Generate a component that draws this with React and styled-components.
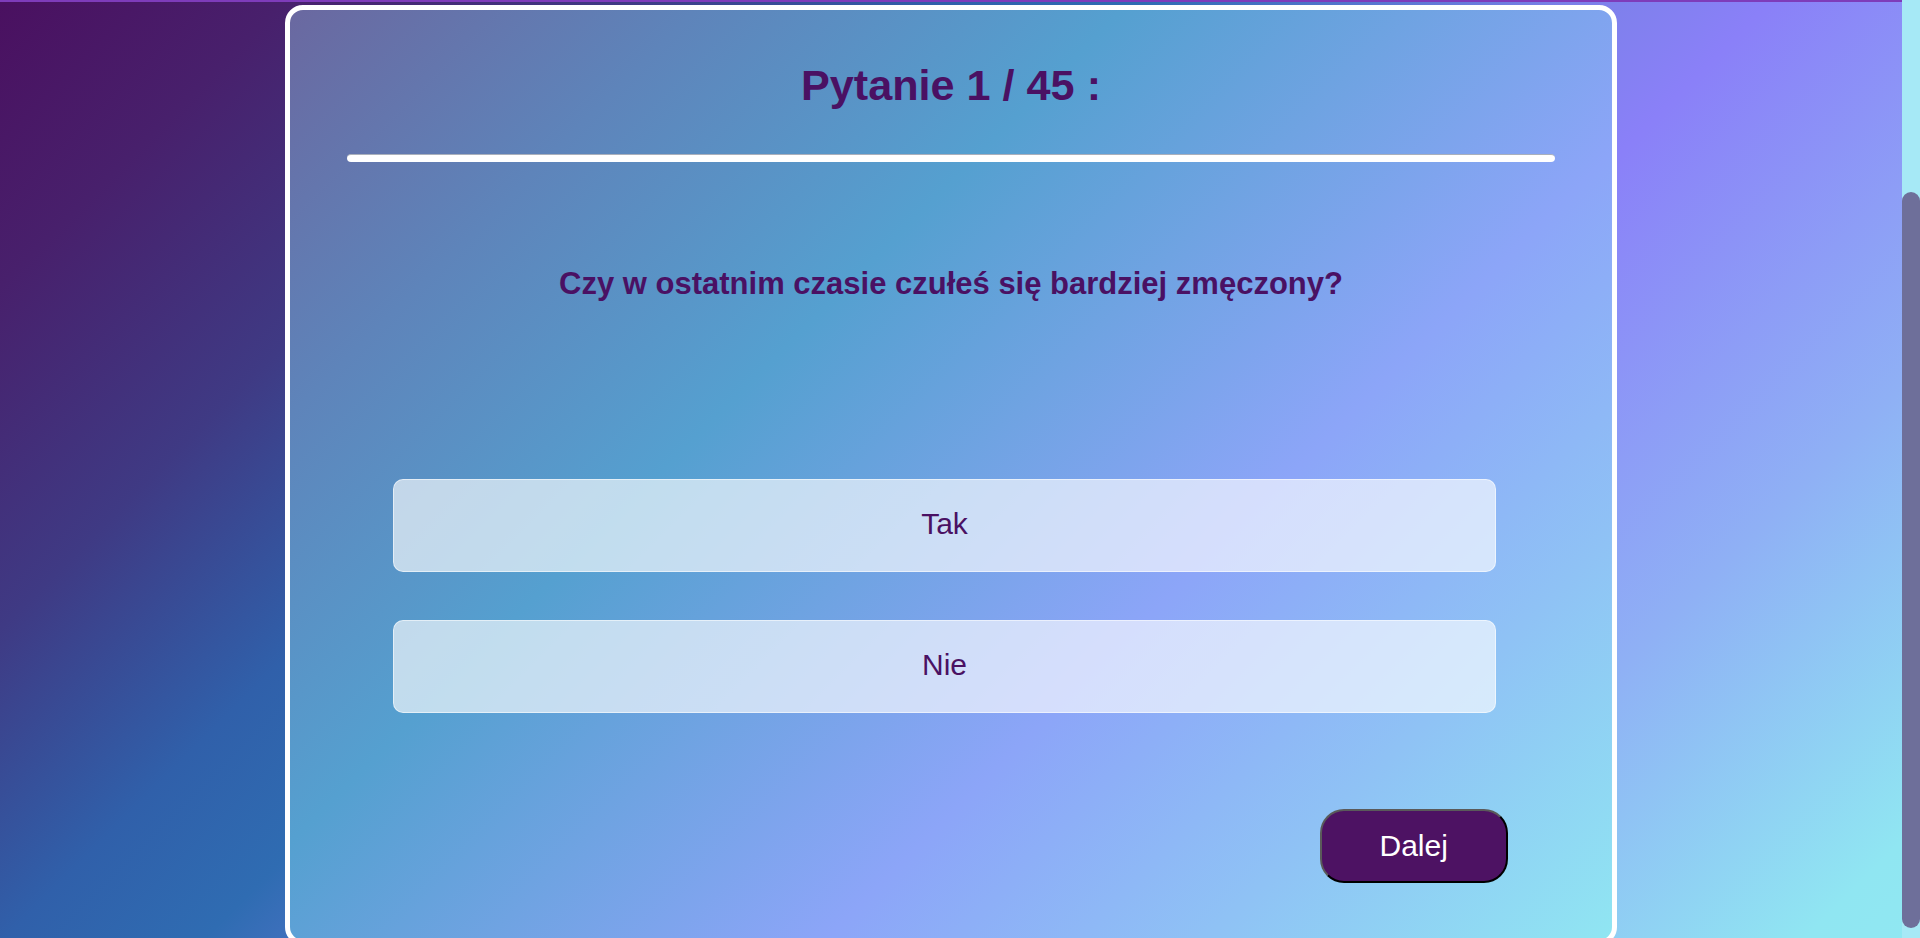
import React, { useLayoutEffect, useRef, useState } from "react";
import styled, { createGlobalStyle } from "styled-components";

const GlobalStyle = createGlobalStyle`
  body {
    margin: 0;
    font-family: "Liberation Sans", Arial, sans-serif;
    color: #4a1163;
  }
`;

const Frame = styled.div`
  height: 100vh;
  display: flex;
  overflow: hidden;
  background: linear-gradient(135deg, #4a1060 0%, #48206c 10%, #3f3a84 22%, #3060aa 33%, #2f6cb2 40%, #7b80e8 55%, #8a80f8 62%, #8fb0f5 80%, #90e6f2 96%, #90e8f2 100%);
`;

const Scroller = styled.div`
  flex: 1;
  overflow-y: auto;
  scrollbar-width: none;
  &::-webkit-scrollbar {
    display: none;
  }
`;

const Rail = styled.div`
  width: 18px;
  flex-shrink: 0;
  background: #a6e9f6;
  display: flex;
  flex-direction: column;
`;

const Thumb = styled.div`
  margin-top: 192px;
  height: 736px;
  border-radius: 9px;
  background: #6e6f9a;
`;

const Page = styled.div`
  display: flex;
  flex-direction: column;
  align-items: center;
  padding-bottom: 5px;
`;

const TopBar = styled.nav`
  align-self: stretch;
  height: 245px;
  border-bottom: 2px solid #7e3cba;
`;

const Card = styled.main`
  width: 70%;
  box-sizing: border-box;
  margin-top: 3px;
  border: 5px solid #fff;
  border-radius: 18px;
  background: linear-gradient(135deg, #6a68a0 0%, #5e84ba 18%, #55a0d0 37%, #6fa3e2 50%, #8ca5f8 65%, #8fc2f5 82%, #90e6f2 100%);
  padding: 51px 0 57px;
  display: flex;
  flex-direction: column;
`;

const Title = styled.h1`
  margin: 0;
  text-align: center;
  font-size: 2.7rem;
  font-weight: 700;
`;

const Rule = styled.hr`
  margin: 44px 57px 0;
  height: 7px;
  border: none;
  border-top: 1px solid #aab0bc;
  border-radius: 4px;
  background: #fff;
`;

const Question = styled.p`
  margin: 104px 0 0;
  text-align: center;
  font-size: 31px;
  font-weight: 700;
`;

const Options = styled.div`
  margin-top: 177px;
  padding: 0 116px 0 103px;
  display: flex;
  flex-direction: column;
  gap: 48px;
`;

const Option = styled.button`
  height: 93px;
  box-sizing: border-box;
  display: flex;
  align-items: center;
  justify-content: center;
  padding: 0 0 4px;
  border: 1px solid rgba(255, 255, 255, 0.55);
  border-radius: 10px;
  background: ${({ $selected }) =>
    $selected ? "rgba(255, 255, 255, 0.85)" : "rgba(255, 255, 255, 0.64)"};
  font-family: inherit;
  font-size: 30px;
  color: #4a1163;
  cursor: pointer;
`;

const Footer = styled.div`
  margin-top: 96px;
  padding-right: 104px;
  display: flex;
  justify-content: flex-end;
`;

const NextButton = styled.button`
  width: 188px;
  height: 74px;
  box-sizing: border-box;
  border: 2px solid;
  border-color: #5a5a5a #000 #000 #5a5a5a;
  border-radius: 24px;
  background: #4d1263;
  color: #fff;
  font-family: inherit;
  font-size: 30px;
  cursor: pointer;
`;

const answers = ["Tak", "Nie"];

const App = () => {
  const [selected, setSelected] = useState(null);
  const scrollRef = useRef(null);

  useLayoutEffect(() => {
    if (scrollRef.current) scrollRef.current.scrollTop = 245;
  }, []);

  return (
    <>
      <GlobalStyle />
      <Frame>
        <Scroller ref={scrollRef}>
          <Page>
            <TopBar />
            <Card>
              <Title>Pytanie 1 / 45 :</Title>
              <Rule />
              <Question>Czy w ostatnim czasie czułeś się bardziej zmęczony?</Question>
              <Options>
                {answers.map((a) => (
                  <Option key={a} $selected={selected === a} onClick={() => setSelected(a)}>
                    {a}
                  </Option>
                ))}
              </Options>
              <Footer>
                <NextButton>Dalej</NextButton>
              </Footer>
            </Card>
          </Page>
        </Scroller>
        <Rail>
          <Thumb />
        </Rail>
      </Frame>
    </>
  );
};

export default App;
